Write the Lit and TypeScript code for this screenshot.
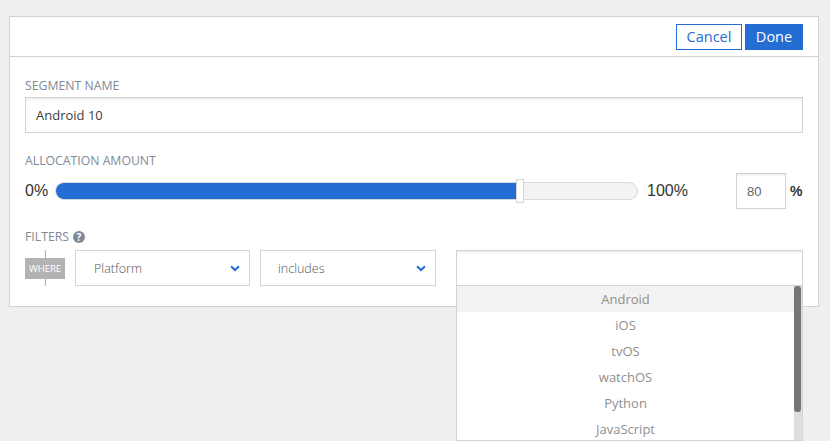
import { LitElement, html, css } from "lit";
import { customElement } from "lit/decorators.js";

const chevron = html`<svg class="chev" width="10" height="7" viewBox="0 0 10 7"><path d="M1 1.2 L5 5 L9 1.2" fill="none" stroke="#246dd3" stroke-width="2"/></svg>`;

@customElement("app-root")
export class AppRoot extends LitElement {
  static styles = css`
    :host { display: block; height: 441px; overflow: hidden; background: #efefef; padding: 16px 11px 0 9px; box-sizing: border-box; font-family: "Open Sans", sans-serif; position: relative; }
    .card { height: 291px; box-sizing: border-box; background: #fff; border: 1px solid #d3d3d3; }
    .head { height: 40px; box-sizing: border-box; border-bottom: 1px solid #d3d3d3; display: flex; justify-content: flex-end; align-items: flex-start; gap: 3px; padding: 7px 15px 0 0; }
    .btn { height: 26px; box-sizing: border-box; font-size: 14.5px; line-height: 23px; text-align: center; border: 1px solid #246dd3; }
    .cancel { width: 66px; color: #246dd3; background: #fff; }
    .done { width: 58px; color: #fff; background: #246dd3; }
    .body { padding: 21px 15px 0 15px; }
    .label { font-size: 12.25px; line-height: 16px; color: #808a97; display: flex; align-items: center; gap: 4px; }
    .name { margin-top: 3px; height: 36px; box-sizing: border-box; border: 1px solid #d3d3d3; box-shadow: inset 0 3px 3px -2px #e4e4e4; font-size: 13px; line-height: 34px; padding-left: 10px; color: #3d3d3d; }
    .alloc { margin-top: 20px; }
    .slider { display: flex; align-items: center; margin-top: 4px; height: 36px; font-family: "Liberation Sans", sans-serif; font-size: 16px; color: #333; }
    .zero { width: 30px; }
    .track { width: 583px; height: 18px; box-sizing: border-box; border: 1px solid #d8d8d8; border-radius: 9px; background: #f3f3f3; position: relative; }
    .fill { width: 461px; height: 16px; background: #246dd3; border-radius: 8px 0 0 8px; }
    .handle { position: absolute; left: 460px; top: -4px; width: 8px; height: 24px; box-sizing: border-box; background: #fff; border: 1px solid #d3d3d3; }
    .hundred { margin-left: 9px; width: 89px; }
    .amount { width: 50px; height: 36px; box-sizing: border-box; border: 1px solid #d3d3d3; font-size: 13px; line-height: 36px; padding-left: 10px; color: #666; box-shadow: inset 0 3px 3px -2px #e4e4e4; }
    .pct { margin-left: 4px; font-size: 14px; font-weight: 700; color: #333; }
    .filters { margin-top: 20px; }
    .help { width: 12px; height: 12px; border-radius: 50%; background: #7f8a97; color: #fff; font-size: 10px; line-height: 12px; font-weight: 700; text-align: center; }
    .row { display: flex; margin-top: 5px; height: 36px; }
    .where { width: 40px; height: 36px; margin-right: 10px; position: relative; display: flex; align-items: center; }
    .where::before { content: ""; position: absolute; left: 20px; top: 0; height: 36px; width: 1px; background: #b0b0b0; }
    .tag { position: relative; width: 40px; height: 21px; background: #b3b3b3; color: #fff; font-size: 9.5px; line-height: 21px; text-align: center; }
    .select { height: 36px; box-sizing: border-box; border: 1px solid #d3d3d3; display: flex; align-items: center; justify-content: space-between; font-size: 12.5px; font-weight: 300; color: #555; padding: 0 9px 0 18px; }
    .s1 { width: 175px; margin-right: 10px; }
    .s2 { width: 176px; margin-right: 20px; padding-left: 17px; }
    .value { flex: 1; box-sizing: border-box; border: 1px solid #d3d3d3; box-shadow: inset 0 3px 3px -2px #e4e4e4; }
    .menu { position: absolute; left: 456px; top: 285px; width: 347px; height: 156px; box-sizing: border-box; background: #fff; border: 1px solid #d3d3d3; padding-right: 8px; overflow: hidden; }
    .item { height: 26px; font-size: 13px; line-height: 26px; text-align: center; color: #8f8f8f; }
    .item.active { background: #f2f2f2; margin-right: -8px; padding-right: 8px; }
    .bar { position: absolute; right: 0; top: 0; width: 8px; height: 154px; background: #dedede; }
    .thumb { width: 7px; height: 126px; background: #767676; border-radius: 3px; }
  `;

  render() {
    const items = ["Android", "iOS", "tvOS", "watchOS", "Python", "JavaScript"];
    return html`
      <div class="card">
        <div class="head">
          <div class="btn cancel">Cancel</div>
          <div class="btn done">Done</div>
        </div>
        <div class="body">
          <div class="label">SEGMENT NAME</div>
          <div class="name">Android 10</div>
          <div class="label alloc">ALLOCATION AMOUNT</div>
          <div class="slider">
            <span class="zero">0%</span>
            <div class="track"><div class="fill"></div><div class="handle"></div></div>
            <span class="hundred">100%</span>
            <div class="amount">80</div>
            <span class="pct">%</span>
          </div>
          <div class="label filters">FILTERS <span class="help">?</span></div>
          <div class="row">
            <div class="where"><div class="tag">WHERE</div></div>
            <div class="select s1">Platform ${chevron}</div>
            <div class="select s2">includes ${chevron}</div>
            <div class="value"></div>
          </div>
        </div>
      </div>
      <div class="menu">
        ${items.map((t, i) => html`<div class="item ${i === 0 ? "active" : ""}">${t}</div>`)}
        <div class="bar"><div class="thumb"></div></div>
      </div>
    `;
  }
}
